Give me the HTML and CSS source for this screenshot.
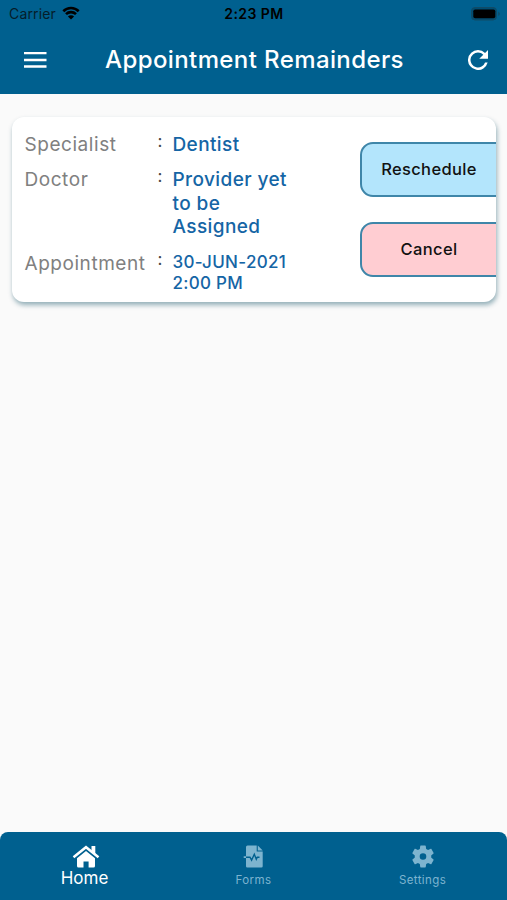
FILE: index.html
```html
<!DOCTYPE html>
<html lang="en">
<head>
    <meta charset="UTF-8">
    <title>Appointment Remainders</title>
    <link rel="stylesheet" href="styles.css">
</head>
<body>
<header class="header">
    <div class="status">
        <div class="carrier">
            <span>Carrier</span>
            <svg class="wifi" viewBox="0 0 18 14" width="18" height="14">
                <path d="M1.3 5.2a11 11 0 0 1 15.4 0M4 8.2a7.1 7.1 0 0 1 10 0" fill="none" stroke="#000" stroke-width="2.6"/>
                <path d="M9 13.6L5.9 10.5a4.4 4.4 0 0 1 6.2 0z"/>
            </svg>
        </div>
        <span class="time">2:23 PM</span>
        <svg class="battery" viewBox="0 0 30 14" width="30" height="14">
            <rect x=".5" y=".5" width="25" height="12.5" rx="3.5" fill="#004d72" stroke="#114a65"/>
            <rect x="2.3" y="2.4" width="22" height="8.8" rx="1.8"/>
            <path d="M27.3 4.5q3 2.3 0 4.6z" fill="#114a65"/>
        </svg>
    </div>
    <div class="bar">
        <svg class="menu" viewBox="0 0 24 16" width="24" height="16">
            <path d="M1 1.2h22.5M1 8h22.5M1 14.5h22.5" stroke="#fff" stroke-width="2.3"/>
        </svg>
        <h1 class="title">Appointment Remainders</h1>
        <svg class="refresh" viewBox="4 4 16 16" width="20" height="20">
            <path fill="#fff" d="M17.65 6.35A7.96 7.96 0 0 0 12 4a8 8 0 1 0 7.73 10h-2.08A6 6 0 1 1 12 6c1.66 0 3.14.69 4.22 1.78L13 11h7V4z"/>
        </svg>
    </div>
</header>
<main class="main">
    <div class="card">
        <div class="info">
            <div class="row">
                <span class="label">Specialist</span><span class="colon">:</span><span class="value">Dentist</span>
            </div>
            <div class="row">
                <span class="label">Doctor</span><span class="colon">:</span><span class="value">Provider yet<br>to be<br>Assigned</span>
            </div>
            <div class="row last">
                <span class="label">Appointment</span><span class="colon">:</span><span class="value date">30-JUN-2021<br>2:00 PM</span>
            </div>
        </div>
        <div class="btns">
            <div class="btn blue"><span>Reschedule</span></div>
            <div class="btn pink"><span>Cancel</span></div>
        </div>
    </div>
</main>
<nav class="tabs">
    <div class="tab active">
        <svg viewBox="0 0 28 23" width="28" height="23">
            <path d="M1.5 12.2L14 2.2l12.5 10" fill="none" stroke="#fff" stroke-width="2.5"/>
            <path fill="#fff" d="M19.5 1h3.8v8l-3.8-3.3zM14 6l9 7.3V21q0 1.600-1.500 1.600h-4.900v-6.200h-5.100v6.200H6.500Q5 22.600 5 21v-7.700z"/>
        </svg>
        <span>Home</span>
    </div>
    <div class="tab">
        <svg viewBox="0 0 22 23" width="22" height="23">
            <path fill="#7db4cf" d="M4.500.5h9.200v6h6v14.700q0 1.300-1.300 1.300H4.300q-1.300 0-1.300-1.300V13H.7v-1.700H3V2Q3 .5 4.500.5zM14.800.5l4.900 4.900h-4.900z"/>
            <path d="M3 12.200h4l1.600 3 2.700-6 2 5 1-2h2.200" fill="none" stroke="#00608f" stroke-width="1.400"/>
        </svg>
        <span>Forms</span>
    </div>
    <div class="tab">
        <svg viewBox="2 2 20 20" width="22" height="23">
            <path fill="#7db4cf" d="M19.430 12.980c.04-.32.07-.64.07-.98s-.03-.66-.07-.98l2.110-1.650c.19-.15.24-.42.12-.64l-2-3.460c-.12-.22-.39-.3-.61-.22l-2.490 1c-.52-.4-1.080-.73-1.690-.98l-.38-2.650A.488.488 0 0 0 14 2h-4c-.25 0-.46.18-.49.42l-.38 2.650c-.61.25-1.170.59-1.690.98l-2.490-1c-.23-.09-.49 0-.61.22l-2 3.460c-.13.22-.07.49.12.64l2.110 1.650c-.04.32-.07.65-.07.98s.03.66.07.98l-2.110 1.650c-.19.15-.24.42-.12.64l2 3.460c.12.22.39.3.61.22l2.490-1c.52.4 1.080.73 1.690.98l.38 2.650c.03.24.24.42.49.42h4c.25 0 .46-.18.49-.42l.38-2.650c.61-.25 1.170-.59 1.690-.98l2.490 1c.23.09.49 0 .61-.22l2-3.460c.12-.22.07-.49-.12-.64zM12 15a3 3 0 1 1 0-6 3 3 0 0 1 0 6z"/>
        </svg>
        <span>Settings</span>
    </div>
</nav>
</body>
</html>
```
FILE: styles.css
```css
html,body{height:100%;overflow:hidden;}
body,h1{margin:0;padding:0;}
body{display:flex;flex-direction:column;background:#fafafa;font-family:Inter,"Liberation Sans",sans-serif;}
svg{display:block;flex:none;}
span,h1{white-space:nowrap;}

.header{height:94px;background:#00608f;flex:none;}
.status{height:27px;display:grid;grid-template-columns:1fr auto 1fr;align-items:center;padding:0 6px 0 9px;font-size:14px;line-height:27px;color:#000;}
.carrier{display:flex;align-items:center;gap:6px;color:#051d2a;letter-spacing:.15px;}
.wifi{margin-top:-2px;}
.time{font-weight:600;letter-spacing:.45px;margin-right:2px;}
.battery{justify-self:end;}
.bar{height:66px;display:flex;align-items:center;padding:0 19px 0 23px;}
.title{flex:1;margin:-1px 0 0 58px;font-size:24px;font-weight:500;color:#fff;letter-spacing:.4px;}

.main{flex:1;padding:23px 11px 0 12px;}
.card{height:185px;box-sizing:border-box;display:flex;justify-content:space-between;background:#fff;border-radius:12px;box-shadow:1px 3px 5px rgba(0,70,90,.42);overflow:hidden;}
.info{padding:15px 0 0 12.5px;}
.row{display:grid;grid-template-columns:133px 15px auto;margin-bottom:11px;align-items:start;}
.label{padding-top:1px;font-size:19px;line-height:23px;color:#808080;letter-spacing:.55px;}
.colon{font-size:17px;line-height:18px;color:#444;}
.value{padding-top:1px;font-size:19px;line-height:23.3px;font-weight:500;color:#1565a5;letter-spacing:.4px;}
.last .label{padding-top:3px;}
.last .colon{padding-top:1px;}
.last .date{padding-top:3px;font-size:17px;line-height:20.5px;letter-spacing:.3px;}
.btns{width:136px;padding-top:25px;flex:none;}
.btn{width:160px;height:55px;box-sizing:border-box;border:2px solid #3f86a9;border-radius:13px;margin-bottom:25px;font-size:16.5px;line-height:51px;font-weight:500;color:#111;letter-spacing:.35px;}
.btn span{display:block;width:134px;text-align:center;}
.blue{background:#b3e5fc;}
.pink{background:#ffcdd2;}

.tabs{height:68px;flex:none;display:flex;background:#00608f;border-radius:8px 8px 0 0;}
.tab{flex:1;display:flex;flex-direction:column;align-items:center;padding-top:13px;font-size:11.5px;line-height:15px;color:#7db4cf;letter-spacing:.4px;}
.tab span{margin-top:5px;}
.active{color:#fff;font-size:17px;line-height:20px;letter-spacing:0;}
.active svg{margin-left:3px;}
.active span{margin-top:0;}
```
